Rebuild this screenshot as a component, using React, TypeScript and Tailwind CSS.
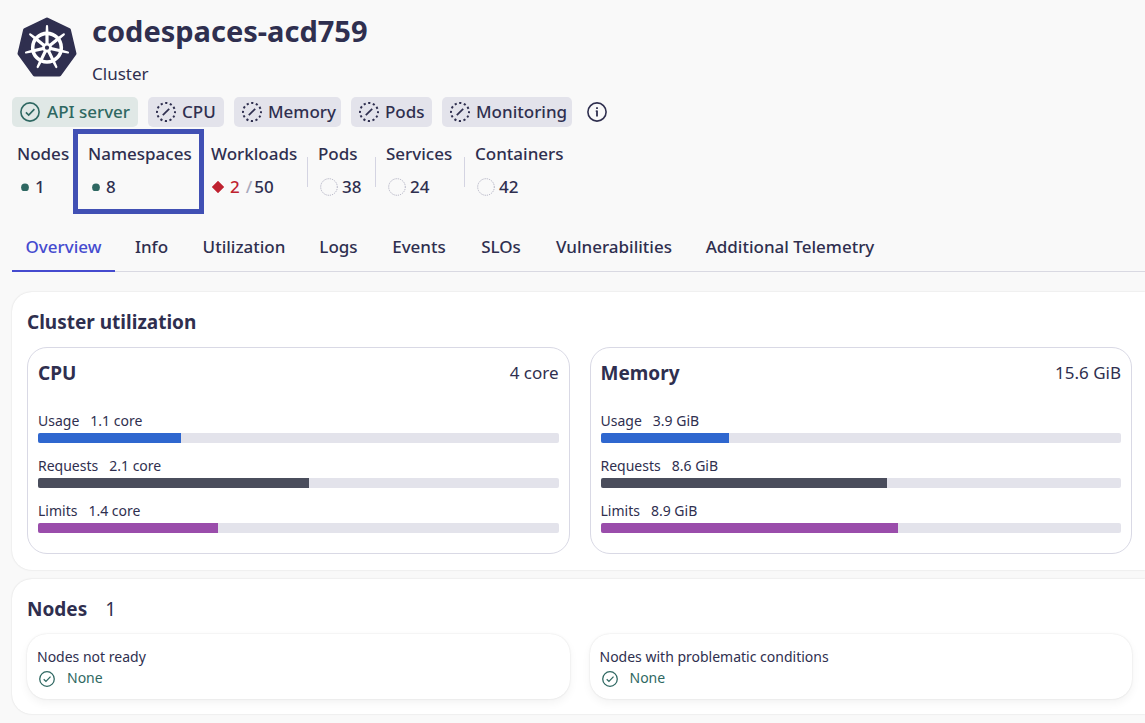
import React from "react";

const SPOKES = [0, 1, 2, 3, 4, 5, 6];

function KubernetesLogo() {
  return (
    <svg className="size-[60px] shrink-0" viewBox="0 0 60 60" role="img" aria-label="Kubernetes">
      <path
        d="M30 2.5 51.9 13 57.5 36.6 42.3 57.5H17.7L2.5 36.6 8.1 13Z"
        fill="#2f2f4f"
        stroke="#2f2f4f"
        strokeWidth="4"
        strokeLinejoin="round"
      />
      <circle cx="30" cy="30.7" r="14.3" fill="none" stroke="#fff" strokeWidth="3.6" />
      {SPOKES.map((i) => (
        <g key={i} transform={`rotate(${(i * 360) / 7} 30 30.7)`}>
          <path d="M28.9 9.2a1.1 1.1 0 0 1 2.2 0L31.6 18 31.6 27.5h-3.2L28.4 18Z" fill="#fff" />
        </g>
      ))}
      <circle cx="30" cy="30.7" r="4.8" fill="#fff" />
      <circle cx="30" cy="30.7" r="2.1" fill="#2f2f4f" />
    </svg>
  );
}

function CheckIcon({ className }: { className: string }) {
  return (
    <svg className={className} viewBox="0 0 20 20" fill="none" stroke="currentColor" strokeWidth="1.6" aria-hidden="true">
      <circle cx="10" cy="10" r="9.1" />
      <path d="M5.9 10.3 8.7 13l5.7-5.9" />
    </svg>
  );
}

function UnknownIcon() {
  return (
    <svg className="size-5 shrink-0" viewBox="0 0 20 20" fill="none" stroke="currentColor" aria-hidden="true">
      <circle cx="10" cy="10" r="9" strokeWidth="2" strokeDasharray="2.2 2.512" strokeDashoffset="1.1" />
      <path d="m6.8 13.2 6.4-6.4" strokeWidth="1.7" />
    </svg>
  );
}

function InfoIcon() {
  return (
    <svg className="size-5" viewBox="0 0 20 20" fill="none" stroke="currentColor" strokeWidth="1.6" aria-hidden="true">
      <circle cx="10" cy="10" r="9.1" />
      <path d="M10 8.6v6M10 5.2v1.9" strokeWidth="1.8" />
      <path d="M8.6 9.1H10" strokeWidth="1" />
    </svg>
  );
}

function Dot() {
  return (
    <svg className="ml-1 size-2" viewBox="0 0 8 8" aria-hidden="true">
      <circle cx="4" cy="4.5" r="3.9" fill="#2f6862" />
    </svg>
  );
}

function Diamond() {
  return (
    <svg className="ml-px size-3" viewBox="0 0 12 12" aria-hidden="true">
      <path d="M6 0 12 6 6 12 0 6Z" fill="#bf2230" stroke="#bf2230" strokeLinejoin="round" strokeWidth=".4" />
    </svg>
  );
}

function EmptyRing() {
  return (
    <svg className="ml-0.5 size-[18px]" viewBox="0 0 18 18" aria-hidden="true">
      <circle cx="9" cy="9" r="8.3" fill="none" stroke="#a9a9bd" strokeWidth="1" strokeDasharray="1.1 1.1" />
    </svg>
  );
}

function Stat({
  label,
  width,
  gap,
  highlighted,
  children,
}: {
  label: string;
  width: string;
  gap: string;
  highlighted?: boolean;
  children: React.ReactNode;
}) {
  return (
    <div className={`relative whitespace-nowrap ${width}`}>
      <dt className="leading-6">{label}</dt>
      <dd className={`mt-[9px] flex items-center leading-6 ${gap}`}>{children}</dd>
      {highlighted && (
        <div className="pointer-events-none absolute -top-[13px] -right-[14px] -bottom-[15px] -left-[15px] border-5 border-[#4150b4]" />
      )}
    </div>
  );
}

function Divider() {
  return <div className="mt-[15px] h-[30px] w-px bg-[#d4d4e2]" />;
}

const HEALTH = [
  { label: "CPU", width: "w-[76px]" },
  { label: "Memory", width: "w-[107px]" },
  { label: "Pods", width: "w-[81px]" },
  { label: "Monitoring", width: "w-[130px]" },
];

const TABS = [
  { label: "Overview", width: "w-[103px]" },
  { label: "Info", width: "w-[63px]" },
  { label: "Utilization", width: "w-[112px]" },
  { label: "Logs", width: "w-[67px]" },
  { label: "Events", width: "w-[84px]" },
  { label: "SLOs", width: "w-[70px]" },
  { label: "Vulnerabilities", width: "w-[146px]" },
  { label: "Additional Telemetry", width: "w-[196px]" },
];

const CPU = [
  { label: "Usage", value: "1.1 core", percent: 27.5, color: "bg-[#2f67cf]" },
  { label: "Requests", value: "2.1 core", percent: 52.1, color: "bg-[#4a4d5c]" },
  { label: "Limits", value: "1.4 core", percent: 34.6, color: "bg-[#9a4dab]" },
];
const MEMORY = [
  { label: "Usage", value: "3.9 GiB", percent: 24.6, color: "bg-[#2f67cf]" },
  { label: "Requests", value: "8.6 GiB", percent: 55.1, color: "bg-[#4a4d5c]" },
  { label: "Limits", value: "8.9 GiB", percent: 57.1, color: "bg-[#9a4dab]" },
];

function UtilizationCard({ title, total, rows }: { title: string; total: string; rows: typeof CPU }) {
  return (
    <article className="rounded-[20px] border border-[#d9d9e5] px-[10px] pt-[10px] pb-5">
      <header className="mb-[23px] flex items-center justify-between leading-[30px]">
        <h3 className="text-[19px] font-bold">{title}</h3>
        <span>{total}</span>
      </header>
      <div className="flex flex-col gap-[13px]">
        {rows.map((r) => (
          <div key={r.label}>
            <div className="mb-[2px] flex gap-[11px] text-sm leading-5">
              <span>{r.label}</span>
              <span>{r.value}</span>
            </div>
            <div className="h-[10px] overflow-hidden rounded-[2px] bg-[#e3e3eb]">
              <div className={`h-full ${r.color}`} style={{ width: `${r.percent}%` }} />
            </div>
          </div>
        ))}
      </div>
    </article>
  );
}

function NodeCard({ label }: { label: string }) {
  return (
    <article className="rounded-[20px] bg-white px-[10px] pt-3 pb-[11px] text-sm leading-[21px] shadow-[0_0_2px_rgba(0,0,0,0.12),0_4px_10px_rgba(0,0,0,0.05)]">
      <p>{label}</p>
      <p className="flex items-center gap-3 text-[#2f6862]">
        <CheckIcon className="mt-0.5 ml-0.5 size-4" />
        None
      </p>
    </article>
  );
}

export default function App() {
  return (
    <main className="min-h-screen overflow-hidden bg-[#f9f9f9] pl-3 font-['Noto_Sans',sans-serif] text-[17px] text-[#2f2f4f]">
      <header className="flex gap-[15px] pt-[17px] pl-[5px]">
        <KubernetesLogo />
        <div>
          <h1 className="text-[29px] leading-7 font-bold">codespaces-acd759</h1>
          <p className="mt-[17px] leading-6">Cluster</p>
        </div>
      </header>

      <div className="mt-[11px] flex items-center gap-[10px] font-medium whitespace-nowrap">
        <div className="flex h-[30px] w-[126px] items-center gap-[7px] rounded-[5px] bg-[#e0e8e6] pl-2 text-[#2f6862]">
          <CheckIcon className="size-5 shrink-0" />
          <span>API server</span>
        </div>
        {HEALTH.map((h) => (
          <div key={h.label} className={`flex h-[30px] items-center gap-[6px] rounded-[5px] bg-[#e3e3eb] pl-2 ${h.width}`}>
            <UnknownIcon />
            <span>{h.label}</span>
          </div>
        ))}
        <button type="button" aria-label="Health information" className="ml-[5px]">
          <InfoIcon />
        </button>
      </div>

      <dl className="mt-[15px] flex gap-[10px] pl-[5px] font-medium">
        <Stat label="Nodes" width="w-[50px]" gap="gap-[6px]"><Dot />1</Stat>
        <Divider />
        <Stat label="Namespaces" width="w-[102px]" gap="gap-[6px]" highlighted><Dot />8</Stat>
        <Divider />
        <Stat label="Workloads" width="w-[86px]" gap="gap-[6px]">
          <Diamond />
          <span className="text-[#bf2230]">2</span>
          <span className="flex gap-[2px]"><span className="text-[#a9a9bd]">/</span>50</span>
        </Stat>
        <Divider />
        <Stat label="Pods" width="w-[47px]" gap="gap-1"><EmptyRing />38</Stat>
        <Divider />
        <Stat label="Services" width="w-[68px]" gap="gap-1"><EmptyRing />24</Stat>
        <Divider />
        <Stat label="Containers" width="w-[86px]" gap="gap-1"><EmptyRing />42</Stat>
      </dl>

      <nav className="mt-[23px] flex gap-[5px] border-b border-[#d9d9e2] font-medium whitespace-nowrap">
        {TABS.map((t, i) => (
          <a
            key={t.label}
            href="#"
            aria-current={i === 0 ? "page" : undefined}
            className={`-mb-px flex justify-center border-b-2 pt-[13px] pb-[11px] leading-6 ${t.width} ${i === 0 ? "border-[#454bcf] text-[#454bcf]" : "border-transparent"}`}
          >
            {t.label}
          </a>
        ))}
      </nav>

      <section className="mt-5 rounded-l-[20px] bg-white pt-[15px] pr-[13px] pb-4 pl-[15px] shadow-[0_0_2px_rgba(0,0,0,0.14)]">
        <h2 className="text-[19px] leading-[30px] font-bold">Cluster utilization</h2>
        <div className="mt-[10px] grid grid-cols-2 gap-5">
          <UtilizationCard title="CPU" total="4 core" rows={CPU} />
          <UtilizationCard title="Memory" total="15.6 GiB" rows={MEMORY} />
        </div>
      </section>

      <section className="mt-[9px] rounded-l-[20px] bg-white pt-[15px] pr-[13px] pb-[15px] pl-[15px] shadow-[0_0_2px_rgba(0,0,0,0.14)]">
        <h2 className="flex gap-[18px] text-[19px] leading-[30px] font-bold">
          Nodes <span className="font-normal">1</span>
        </h2>
        <div className="mt-[10px] grid grid-cols-2 gap-5">
          <NodeCard label="Nodes not ready" />
          <NodeCard label="Nodes with problematic conditions" />
        </div>
      </section>
    </main>
  );
}
